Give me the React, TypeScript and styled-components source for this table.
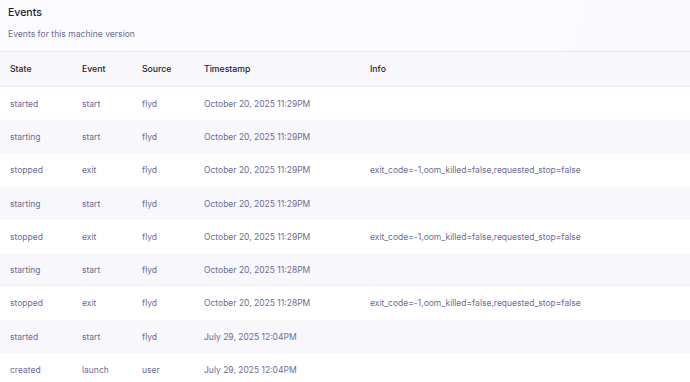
import React, { FC } from 'react';
import styled, { createGlobalStyle } from 'styled-components';

const GlobalStyle = createGlobalStyle`
  html, body {
    margin: 0;
    padding: 0;
    background: #ffffff;
    font-family: Inter, "Noto Sans", sans-serif;
  }
`;

type EventRow = {
    state: string;
    event: string;
    source: string;
    timestamp: string;
    info?: string;
};

const stopInfo = 'exit_code=-1,oom_killed=false,requested_stop=false';

const events: EventRow[] = [
    { state: 'started', event: 'start', source: 'flyd', timestamp: 'October 20, 2025 11:29PM' },
    { state: 'starting', event: 'start', source: 'flyd', timestamp: 'October 20, 2025 11:29PM' },
    { state: 'stopped', event: 'exit', source: 'flyd', timestamp: 'October 20, 2025 11:29PM', info: stopInfo },
    { state: 'starting', event: 'start', source: 'flyd', timestamp: 'October 20, 2025 11:29PM' },
    { state: 'stopped', event: 'exit', source: 'flyd', timestamp: 'October 20, 2025 11:29PM', info: stopInfo },
    { state: 'starting', event: 'start', source: 'flyd', timestamp: 'October 20, 2025 11:28PM' },
    { state: 'stopped', event: 'exit', source: 'flyd', timestamp: 'October 20, 2025 11:28PM', info: stopInfo },
    { state: 'started', event: 'start', source: 'flyd', timestamp: 'July 29, 2025 12:04PM' },
    { state: 'created', event: 'launch', source: 'user', timestamp: 'July 29, 2025 12:04PM' },
];

const StyledPanel = styled.div`
display: flex;
flex-direction: column;
width: 690px;
height: 382px;
overflow: hidden;
background: #ffffff;
`;

const StyledHeader = styled.div`
display: flex;
flex-direction: column;
gap: 7px;
padding: 5px 8px 0;
height: 46px;
flex-shrink: 0;
background: linear-gradient(100deg, #fbfbfe 0%, #fcfcfe 60%, #fafafd 100%);
border-bottom: 1px solid #e8e7f0;
`;

const StyledTitle = styled.div`
color: #1c1a33;
font-size: 10.5px;
font-weight: 500;
line-height: 16px;
`;

const StyledSubtitle = styled.div`
color: #6e6b93;
font-size: 8.6px;
line-height: 12px;
`;

const StyledRow = styled.div<{ $striped?: boolean; $head?: boolean }>`
display: grid;
grid-template-columns: 72px 60px 62px 166px 1fr;
align-items: center;
padding-left: 10px;
height: ${p => (p.$head ? '34px' : '33.3px')};
flex-shrink: 0;
background: ${p => (p.$head ? '#f8f8fc' : p.$striped ? '#f7f7fc' : '#ffffff')};
border-bottom: ${p => (p.$head ? '1px solid #ebeaf2' : 'none')};
`;

const StyledHeadCell = styled.div`
color: #1c1a33;
font-size: 8.7px;
font-weight: 500;
`;

const StyledCell = styled.div`
color: #6e6b93;
font-size: 8.5px;
white-space: nowrap;
`;

const App: FC = () => {
    const renderedRows = events.map((row, i) => (
        <StyledRow key={i} $striped={i % 2 === 1}>
            <StyledCell>{row.state}</StyledCell>
            <StyledCell>{row.event}</StyledCell>
            <StyledCell>{row.source}</StyledCell>
            <StyledCell>{row.timestamp}</StyledCell>
            <StyledCell>{row.info}</StyledCell>
        </StyledRow>
    ));

    return (
        <>
            <GlobalStyle />
            <StyledPanel>
                <StyledHeader>
                    <StyledTitle>Events</StyledTitle>
                    <StyledSubtitle>Events for this machine version</StyledSubtitle>
                </StyledHeader>

                <StyledRow $head>
                    <StyledHeadCell>State</StyledHeadCell>
                    <StyledHeadCell>Event</StyledHeadCell>
                    <StyledHeadCell>Source</StyledHeadCell>
                    <StyledHeadCell>Timestamp</StyledHeadCell>
                    <StyledHeadCell>Info</StyledHeadCell>
                </StyledRow>

                {renderedRows}
            </StyledPanel>
        </>
    );
};

export default App;
